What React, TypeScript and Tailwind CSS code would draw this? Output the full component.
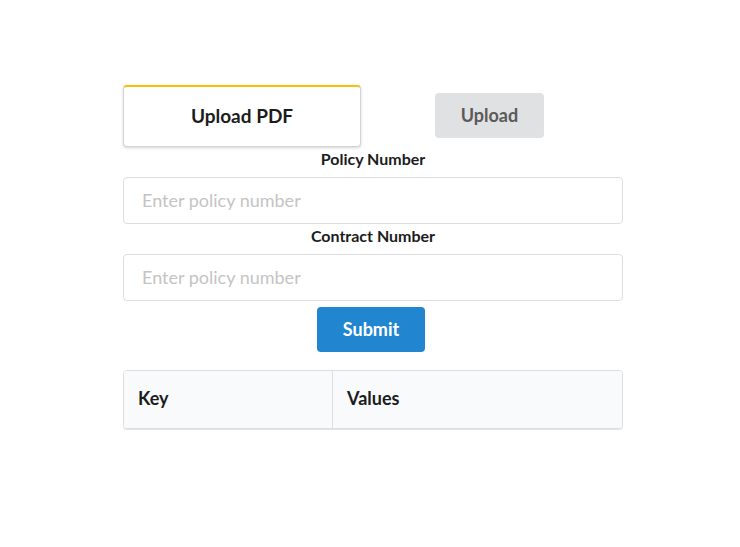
export default function App() {
  return (
    <div className="min-h-[547px] w-full bg-white font-['Lato',sans-serif] text-[#1b1c1d]">
      <div className="ml-[123px] w-[500px] pt-[85px]">
        {/* Upload row */}
        <div className="flex items-start">
          <div className="flex h-[62px] w-[238px] items-center justify-center rounded-[4px] border border-[#d4d4d5] border-t-2 border-t-[#fbbd08] bg-white shadow-[0_1px_3px_0_#d4d4d5]">
            <span className="text-[19px] font-bold">Upload PDF</span>
          </div>
          <button className="ml-[74px] mt-[8px] h-[45px] w-[109px] rounded-[4px] bg-[#e0e1e2] text-[18px] font-bold text-[#5a5a5a]">
            Upload
          </button>
        </div>

        {/* Form */}
        <div className="flex flex-col">
          <label className="text-center text-[16px] font-bold leading-[24px]">Policy Number</label>
          <input
            className="mt-[6px] h-[47px] w-full rounded-[4px] border border-[#dededf] px-[18px] pb-[2px] text-[18px] outline-none placeholder:text-[#c4c4c4]"
            placeholder="Enter policy number"
          />
          <label className="text-center text-[16px] font-bold leading-[24px]">Contract Number</label>
          <input
            className="mt-[6px] h-[47px] w-full rounded-[4px] border border-[#dededf] px-[18px] pb-[2px] text-[18px] outline-none placeholder:text-[#c4c4c4]"
            placeholder="Enter policy number"
          />
          <div className="mt-[6px] flex">
            <button className="ml-[194px] h-[45px] w-[108px] rounded-[4px] bg-[#2185d0] text-[18px] font-bold text-white">
              Submit
            </button>
          </div>
        </div>

        {/* Table */}
        <div className="mt-[18px] overflow-hidden rounded-[4px] border border-[#dededf] shadow-[0_1px_0_0_#e4e4e4]">
          <div className="flex h-[57px] bg-[#f9fafb]">
            <div className="flex w-[209px] items-center border-r border-[#dededf] px-[14px] pb-[2px] text-[18px] font-bold">
              Key
            </div>
            <div className="flex flex-1 items-center px-[14px] pb-[2px] text-[18px] font-bold">Values</div>
          </div>
        </div>
      </div>
    </div>
  );
}
